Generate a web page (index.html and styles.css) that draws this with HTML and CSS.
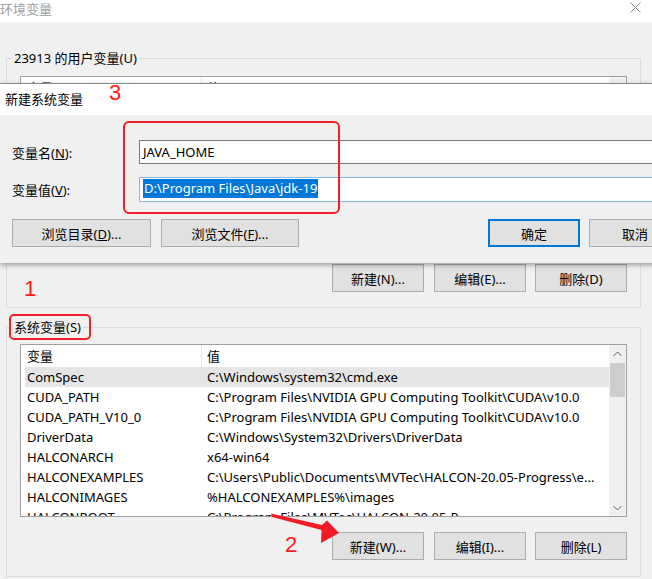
FILE: index.html
```html
<!DOCTYPE html>
<html lang="zh-CN">
<head>
<meta charset="utf-8">
<title>环境变量</title>
<link rel="stylesheet" href="styles.css">
</head>
<body>
<div class="window">
  <div class="titlebar">
    <span class="title">环境变量</span>
    <svg class="close" width="11" height="11" viewBox="0 0 11 11"><path d="M0.5 0.5L10.5 10.5M10.5 0.5L0.5 10.5" stroke="#8a8a8a" stroke-width="1" fill="none"/></svg>
  </div>

  <div class="content">
    <div class="group group-user">
      <div class="legend">23913 的用户变量(U)</div>
      <div class="list list-user">
        <div class="list-main">
          <div class="list-head"><span class="hc1">变量</span><span class="hc2">值</span></div>
        </div>
        <div class="scroll">
          <div class="arrow-box"><svg width="9" height="6" viewBox="0 0 9 6"><path d="M0.5 5L4.5 1L8.5 5" stroke="#606060" fill="none"/></svg></div>
        </div>
      </div>
      <div class="btns">
        <button class="btn">新建(N)...</button>
        <button class="btn">编辑(E)...</button>
        <button class="btn">删除(D)</button>
      </div>
    </div>

    <div class="group group-sys">
      <div class="legend">系统变量(S)</div>
      <div class="list list-sys">
        <div class="list-main">
          <div class="list-head"><span class="hc1">变量</span><span class="hc2">值</span></div>
          <div class="row selected"><span class="c1">ComSpec</span><span class="c2">C:\Windows\system32\cmd.exe</span></div>
          <div class="row"><span class="c1">CUDA_PATH</span><span class="c2">C:\Program Files\NVIDIA GPU Computing Toolkit\CUDA\v10.0</span></div>
          <div class="row"><span class="c1">CUDA_PATH_V10_0</span><span class="c2">C:\Program Files\NVIDIA GPU Computing Toolkit\CUDA\v10.0</span></div>
          <div class="row"><span class="c1">DriverData</span><span class="c2">C:\Windows\System32\Drivers\DriverData</span></div>
          <div class="row"><span class="c1">HALCONARCH</span><span class="c2">x64-win64</span></div>
          <div class="row"><span class="c1">HALCONEXAMPLES</span><span class="c2">C:\Users\Public\Documents\MVTec\HALCON-20.05-Progress\e...</span></div>
          <div class="row"><span class="c1">HALCONIMAGES</span><span class="c2">%HALCONEXAMPLES%\images</span></div>
          <div class="row"><span class="c1">HALCONROOT</span><span class="c2">C:\Program Files\MVTec\HALCON-20.05-P...</span></div>
        </div>
        <div class="scroll">
          <div class="arrow-box"><svg width="9" height="6" viewBox="0 0 9 6"><path d="M0.5 5L4.5 1L8.5 5" stroke="#606060" fill="none"/></svg></div>
          <div class="track"><div class="thumb"></div></div>
          <div class="arrow-box"><svg width="9" height="6" viewBox="0 0 9 6"><path d="M0.5 1L4.5 5L8.5 1" stroke="#606060" fill="none"/></svg></div>
        </div>
      </div>
      <div class="btns btns-sys">
        <button class="btn">新建(W)...</button>
        <button class="btn">编辑(I)...</button>
        <button class="btn">删除(L)</button>
      </div>
    </div>
  </div>

  <div class="dialog">
    <div class="dlg-title">新建系统变量</div>
    <div class="dlg-body">
      <div class="field">
        <label class="field-label">变量名(<u>N</u>):</label>
        <div class="input">JAVA_HOME</div>
      </div>
      <div class="field field-value">
        <label class="field-label">变量值(<u>V</u>):</label>
        <div class="input input-focus"><span class="sel">D:\Program Files\Java\jdk-19</span></div>
      </div>
      <div class="dlg-btns">
        <button class="btn btn-browse1">浏览目录(<u>D</u>)...</button>
        <button class="btn btn-browse2">浏览文件(<u>F</u>)...</button>
        <button class="btn btn-ok">确定</button>
        <button class="btn btn-cancel">取消</button>
      </div>
    </div>
  </div>

  <div class="mark box-fields"></div>
  <div class="mark box-sys"></div>
  <div class="num num-3">3</div>
  <div class="num num-1">1</div>
  <div class="num num-2">2</div>
  <svg class="arrow" width="90" height="45" viewBox="260 505 90 45">
    <polygon points="271,513.5 322,525 327,520.5 339,533 321,543 321.5,530 272,517" fill="#f21c24"/>
  </svg>
</div>
</body>
</html>
```

FILE: styles.css
```css
* { box-sizing: border-box; }

html, body {
  margin: 0;
  padding: 0;
  background: #f0f0f0;
}

.window {
  position: relative;
  width: 652px;
  height: 579px;
  overflow: hidden;
  background: #f0f0f0;
  font-family: "Noto Sans", "Noto Sans CJK SC", sans-serif;
  font-size: 13px;
  color: #000;
}

.titlebar {
  height: 22px;
  background: #fff;
  display: flex;
  align-items: flex-start;
  justify-content: space-between;
  padding: 0 11px 0 0;
}

.title {
  color: #a0a0a0;
  font-size: 13px;
  line-height: 18px;
}

.close { display: block; margin-top: 2px; }

.content {
  padding-left: 6px;
}

.group {
  width: 635px;
  border: 1px solid #dcdcdc;
}

.group-user {
  margin-top: 36px;
  padding-bottom: 15px;
}

.group-sys {
  margin-top: 19px;
  padding-bottom: 16px;
}

.legend {
  width: fit-content;
  margin: -10px 0 0 5px;
  padding: 0 2px;
  height: 18px;
  line-height: 18px;
  background: #f0f0f0;
}

.list {
  display: flex;
  width: 607px;
  margin-left: 13px;
  border: 1px solid #a0a0a0;
  background: #fff;
  overflow: hidden;
}

.list-user {
  margin-top: 9px;
  height: 178px;
}

.list-sys {
  margin-top: 8px;
  height: 173px;
}

.list-main {
  flex: 1;
  min-width: 0;
  overflow: hidden;
}

.list-head {
  display: flex;
  height: 22px;
  line-height: 22px;
}

.hc1 {
  width: 181px;
  padding-left: 6px;
  border-right: 1px solid #e5e5e5;
}

.hc2 { padding-left: 5px; }

.row {
  display: flex;
  height: 20px;
  line-height: 20px;
  margin-left: 4px;
  white-space: nowrap;
}

.row.selected { background: #e5e5e5; }

.c1 {
  width: 177px;
  padding-left: 2px;
  flex: none;
}

.c2 { padding-left: 5px; }

.scroll {
  width: 17px;
  flex: none;
  background: #f0f0f0;
  display: flex;
  flex-direction: column;
}

.arrow-box {
  height: 17px;
  display: flex;
  align-items: center;
  justify-content: center;
  flex: none;
}

.track {
  flex: 1;
  padding: 1px 1px 0 1px;
}

.thumb {
  height: 34px;
  background: #cdcdcd;
}

.btns {
  display: flex;
  justify-content: flex-end;
  gap: 10px;
  margin-top: 10px;
  padding-right: 13px;
}

.btns-sys { margin-top: 15px; }

.btn {
  width: 92px;
  height: 28px;
  border: 1px solid #adadad;
  background: #e1e1e1;
  font-family: inherit;
  font-size: 13px;
  color: #000;
  padding: 0;
  margin: 0;
}

.btns .btn:last-child { margin-left: -1px; }

/* dialog */
.dialog {
  position: absolute;
  left: 0;
  top: 83px;
  width: 700px;
  height: 180px;
  border-top: 1px solid #8a8a8a;
  background: #f0f0f0;
  box-shadow: 0 2px 5px rgba(0,0,0,0.35);
}

.dlg-title {
  height: 31px;
  line-height: 31px;
  background: #fff;
  padding-left: 5px;
}

.dlg-body {
  padding: 25px 0 0 12px;
}

.field {
  display: flex;
  align-items: center;
  height: 24px;
}

.field-value {
  margin-top: 13px;
  height: 25px;
}

.field-label {
  width: 127px;
}

.input {
  width: 560px;
  height: 100%;
  background: #fff;
  border: 1px solid #7a7a7a;
  padding-left: 3px;
  line-height: 22px;
  white-space: nowrap;
}

.input-focus {
  border-color: #86b6e0;
  line-height: 21px;
}

.sel {
  background: #0078d7;
  color: #fff;
  display: inline-block;
  line-height: 19px;
  margin-top: 1px;
  padding: 0 1px;
}

.dlg-btns {
  display: flex;
  margin-top: 17px;
}

.btn-browse1 { width: 139px; }
.btn-browse2 { width: 138px; margin-left: 10px; }
.btn-ok {
  margin-left: 189px;
  border: 2px solid #0078d7;
}
.btn-cancel { margin-left: 9px; }

/* annotations */
.mark {
  position: absolute;
  border: 2px solid #ee2028;
  border-radius: 6px;
}

.box-fields {
  left: 123px;
  top: 121px;
  width: 217px;
  height: 93px;
}

.box-sys {
  left: 9px;
  top: 314px;
  width: 82px;
  height: 26px;
  border-radius: 5px;
}

.num {
  position: absolute;
  font-family: "Liberation Sans", sans-serif;
  font-size: 22px;
  line-height: 1;
  color: #ff1a1a;
}

.num-3 { left: 109px; top: 82px; }
.num-1 { left: 24px; top: 278px; }
.num-2 { left: 285px; top: 534px; }

.arrow {
  position: absolute;
  left: 260px;
  top: 505px;
}
```
